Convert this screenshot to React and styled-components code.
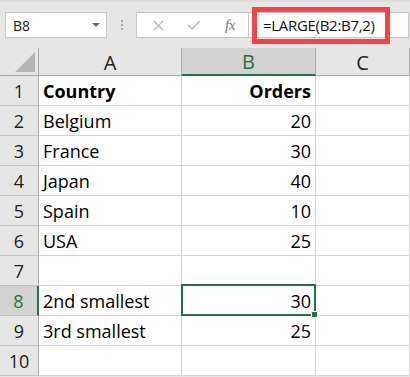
import React from "react";
import styled, { createGlobalStyle } from "styled-components";

const Global = createGlobalStyle`
  html, body { margin: 0; padding: 0; background: #e6e6e6; }
  body { font-family: "Open Sans", "Noto Sans", sans-serif; }
  * { box-sizing: border-box; }
`;

const Page = styled.div`
  width: 410px;
  height: 377px;
  overflow: hidden;
  background: #e6e6e6;
`;

const Toolbar = styled.div`
  height: 48px;
  display: flex;
  align-items: center;
  padding: 0 0 0 5px;
  border-top: 2px solid #dcdcdc;
`;

const NameBox = styled.div`
  width: 102px;
  height: 26px;
  background: #fff;
  border: 1px solid #c6c6c6;
  display: flex;
  align-items: center;
  justify-content: space-between;
  padding: 0 6px 0 7px;
  font-family: "Open Sans", sans-serif;
  font-size: 14px;
  color: #222;
`;

const Caret = styled.span`
  width: 0;
  height: 0;
  border-left: 4px solid transparent;
  border-right: 4px solid transparent;
  border-top: 4px solid #6d6d6d;
`;

const Dots = styled.div`
  width: 29px;
  display: flex;
  flex-direction: column;
  align-items: center;
  gap: 2px;
  span {
    width: 2px;
    height: 2px;
    background: #a9a9a9;
  }
`;

const ButtonBox = styled.div`
  width: 112px;
  height: 26px;
  background: #fff;
  border: 1px solid #c6c6c6;
  border-right: none;
  display: flex;
  align-items: center;
  padding-left: 10px;
`;

const IconBtn = styled.span`
  width: ${(p) => p.$w}px;
  display: flex;
  justify-content: center;
  align-items: center;
  color: #bdbdbd;
`;

const Fx = styled.span`
  font-family: "Liberation Serif", serif;
  font-style: italic;
  font-size: 15px;
  color: #777;
  letter-spacing: -0.5px;
`;

const FormulaInput = styled.div`
  position: relative;
  width: 161px;
  height: 26px;
  background: #fff;
  border: 1px solid #c6c6c6;
  display: flex;
  align-items: center;
  padding-left: 14px;
  font-family: "Open Sans", sans-serif;
  font-size: 15px;
  color: #111;
  letter-spacing: -0.3px;
`;

const Highlight = styled.div`
  position: absolute;
  left: 3px;
  top: -6px;
  width: 138px;
  height: 37px;
  border: 5px solid #f44448;
  pointer-events: none;
`;

const Grid = styled.div`
  display: grid;
  grid-template-columns: 39px 143px 134px 94px;
  grid-template-rows: 28px;
  grid-auto-rows: 30px;
  font-family: "Open Sans", sans-serif;
  font-size: 18px;
  color: #000;
`;

const Corner = styled.div`
  position: relative;
  border-right: 1px solid #ababab;
  border-bottom: 1px solid #ababab;
  background: #e6e6e6;
  svg { position: absolute; right: 3px; bottom: 3px; }
`;

const ColHead = styled.div`
  display: flex;
  align-items: center;
  justify-content: center;
  font-family: "Open Sans", sans-serif;
  font-size: 20px;
  padding-top: 1px;
  background: ${(p) => (p.$active ? "#d2d2d2" : "#e6e6e6")};
  color: ${(p) => (p.$active ? "#217346" : "#222")};
  border-right: 1px solid #ababab;
  border-bottom: ${(p) => (p.$active ? "2px solid #217346" : "1px solid #ababab")};
`;

const RowHead = styled.div`
  display: flex;
  align-items: center;
  justify-content: center;
  font-family: "Open Sans", sans-serif;
  font-size: 18px;
  background: ${(p) => (p.$active ? "#d2d2d2" : "#e6e6e6")};
  color: ${(p) => (p.$active ? "#217346" : "#222")};
  border-right: ${(p) => (p.$active ? "2px solid #217346" : "1px solid #ababab")};
  border-bottom: 1px solid #c4c4c4;
`;

const Cell = styled.div`
  position: relative;
  display: flex;
  align-items: center;
  justify-content: ${(p) => (p.$num ? "flex-end" : "flex-start")};
  padding: 0 4px 0 4px;
  background: #fff;
  font-weight: ${(p) => (p.$bold ? 700 : 400)};
  border-right: 1px solid #d4d4d4;
  border-bottom: 1px solid #d4d4d4;
  white-space: nowrap;
  ${(p) =>
    p.$selected &&
    `
    &::after {
      content: "";
      position: absolute;
      left: -1px; top: -2px; right: -1px; bottom: -1px;
      border: 2px solid #217346;
      pointer-events: none;
    }
    &::before {
      content: "";
      position: absolute;
      right: -3px; bottom: -3px;
      width: 5px; height: 5px;
      background: #217346;
      border: 1px solid #fff;
      z-index: 2;
    }
  `}
`;

const rows = [
  ["Country", "Orders", true],
  ["Belgium", "20"],
  ["France", "30"],
  ["Japan", "40"],
  ["Spain", "10"],
  ["USA", "25"],
  ["", ""],
  ["2nd smallest", "30"],
  ["3rd smallest", "25"],
  ["", ""],
];

export default function App() {
  return (
    <Page>
      <Global />
      <Toolbar>
        <NameBox>
          <span>B8</span>
          <Caret />
        </NameBox>
        <Dots>
          <span />
          <span />
          <span />
        </Dots>
        <ButtonBox>
          <IconBtn $w={22}>
            <svg width="11" height="11" viewBox="0 0 11 11">
              <path d="M1 1L10 10M10 1L1 10" stroke="#bdbdbd" strokeWidth="1.4" fill="none" />
            </svg>
          </IconBtn>
          <IconBtn $w={50}>
            <svg width="14" height="10" viewBox="0 0 14 10">
              <path d="M1 5L5 9L13 1" stroke="#bdbdbd" strokeWidth="1.7" fill="none" />
            </svg>
          </IconBtn>
          <IconBtn $w={22}>
            <Fx>fx</Fx>
          </IconBtn>
        </ButtonBox>
        <FormulaInput>
          =LARGE(B2:B7,2)
          <Highlight />
        </FormulaInput>
      </Toolbar>
      <Grid>
        <Corner>
          <svg width="20" height="20" viewBox="0 0 20 20">
            <path d="M20 0L20 20L0 20Z" fill="#b5b5b5" />
          </svg>
        </Corner>
        <ColHead>A</ColHead>
        <ColHead $active>B</ColHead>
        <ColHead>C</ColHead>
        {rows.map(([a, b, bold], i) => (
          <React.Fragment key={i}>
            <RowHead $active={i === 7}>{i + 1}</RowHead>
            <Cell $bold={bold}>{a}</Cell>
            <Cell $bold={bold} $num $selected={i === 7}>
              {b}
            </Cell>
            <Cell />
          </React.Fragment>
        ))}
      </Grid>
    </Page>
  );
}
